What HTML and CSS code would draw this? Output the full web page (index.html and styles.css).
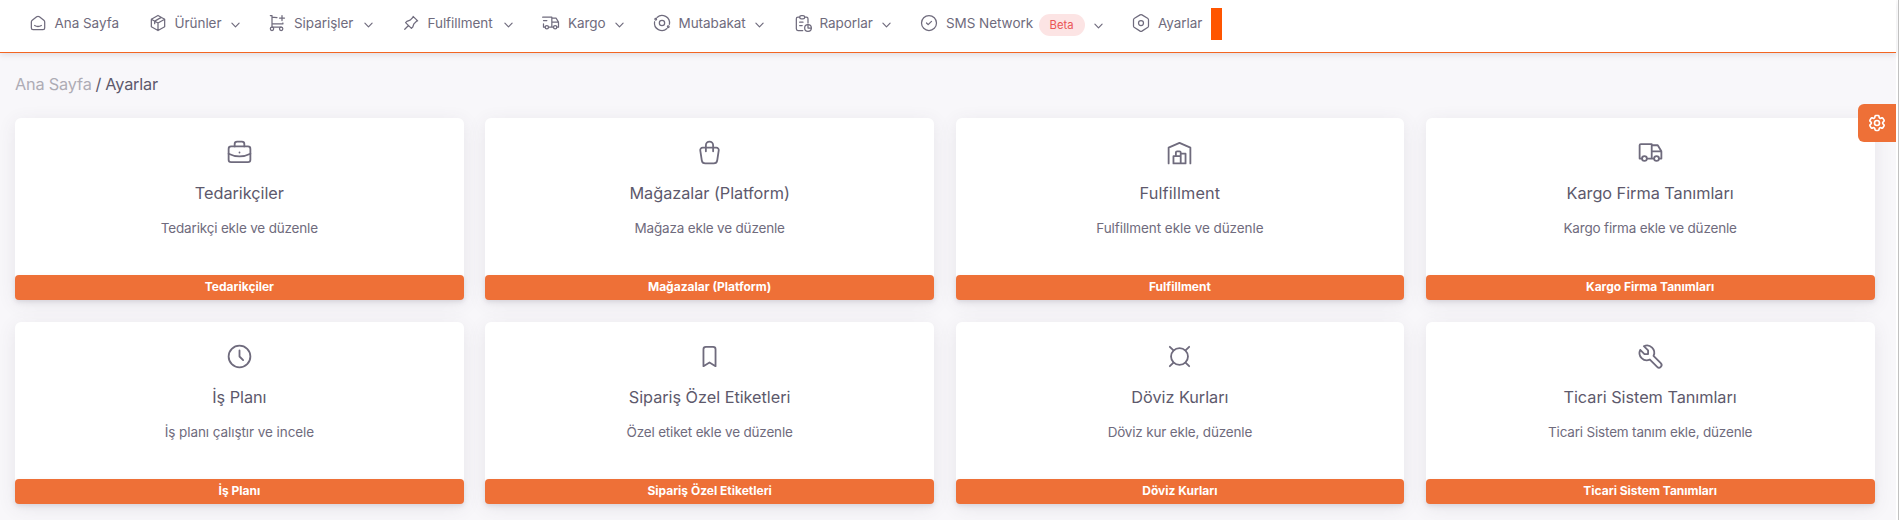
FILE: index.html
```html
<!DOCTYPE html>
<html lang="tr">
<head>
<meta charset="utf-8">
<title>Ayarlar</title>
<link rel="stylesheet" href="styles.css">
</head>
<body>
<svg class="sprite" aria-hidden="true">
  <symbol id="chevron" viewBox="0 0 10 6"><path d="M1 1l4 4l4-4"/></symbol>
</svg>
<div class="page">
  <nav class="navbar">
    <a class="nav-item"><svg class="icon" viewBox="0 0 24 24"><path d="M19 8.71l-5.333-4.148a2.666 2.666 0 0 0-3.274 0L5.059 8.71A2.665 2.665 0 0 0 4.03 10.815v7.2a2 2 0 0 0 2 2h12a2 2 0 0 0 2-2v-7.2c0-.823-.38-1.6-1.03-2.105M16 15c-2.21 1.333-5.792 1.333-8 0"/></svg><span>Ana Sayfa</span></a>
    <a class="nav-item"><svg class="icon" viewBox="0 0 24 24"><path d="M12 3l8 4.5v9L12 21l-8-4.500v-9zM12 12l8-4.500M12 12v9M12 12L4 7.500M16 5.250l-8 4.500M8 9.750v3"/></svg><span>Ürünler</span><svg class="chevron"><use href="#chevron"/></svg></a>
    <a class="nav-item"><svg class="icon" viewBox="0 0 24 24"><circle cx="6" cy="19" r="2"/><circle cx="17" cy="19" r="2"/><path d="M17 17H6V3H4M6 5l6 .429M19.143 12L19 13H6M15 6h6M18 3v6"/></svg><span>Siparişler</span><svg class="chevron"><use href="#chevron"/></svg></a>
    <a class="nav-item"><svg class="icon" viewBox="0 0 24 24"><path d="M15 4.500l-4 4L7 10l-1.500 1.500l7 7L14 17l1.500-4l4-4M9 15l-4.500 4.500M14.500 4L20 9.500"/></svg><span>Fulfillment</span><svg class="chevron"><use href="#chevron"/></svg></a>
    <a class="nav-item"><svg class="icon" viewBox="0 0 24 24"><circle cx="7" cy="17" r="2"/><circle cx="17" cy="17" r="2"/><path d="M5 17H3v-4M2 5h11v12m-4 0h6m4 0h2v-6h-8m0-5h5l3 5M3 9h4"/></svg><span>Kargo</span><svg class="chevron"><use href="#chevron"/></svg></a>
    <a class="nav-item"><svg class="icon" viewBox="0 0 24 24"><circle cx="12" cy="12" r="3.200"/><circle cx="19.500" cy="16.500" r="1"/><circle cx="4.500" cy="7.500" r="1"/><path d="M6 5.300A9 9 0 0 1 20.900 13.500M3.100 10.500A9 9 0 0 0 18 18.700"/></svg><span>Mutabakat</span><svg class="chevron"><use href="#chevron"/></svg></a>
    <a class="nav-item"><svg class="icon" viewBox="0 0 24 24"><path d="M8 5H6a2 2 0 0 0-2 2v12a2 2 0 0 0 2 2h5.700M18 12V7a2 2 0 0 0-2-2h-2M18 14v4h4M8 11h4M8 15h3"/><rect x="8" y="3" width="6" height="4" rx="2"/><circle cx="18" cy="18" r="4"/></svg><span>Raporlar</span><svg class="chevron"><use href="#chevron"/></svg></a>
    <a class="nav-item"><svg class="icon" viewBox="0 0 24 24"><circle cx="12" cy="12" r="9"/><path d="M9 12l2 2l4-4"/></svg><span>SMS Network</span><span class="badge">Beta</span><svg class="chevron"><use href="#chevron"/></svg></a>
    <a class="nav-item"><svg class="icon" viewBox="0 0 24 24"><path d="M19.875 6.270A2.225 2.225 0 0 1 21 8.218v7.284c0 .809-.443 1.555-1.158 1.948l-6.750 4.270a2.269 2.269 0 0 1-2.184 0l-6.750-4.270A2.225 2.225 0 0 1 3 15.502V8.217c0-.809.443-1.554 1.158-1.947l6.750-3.980a2.330 2.330 0 0 1 2.250 0z"/><circle cx="12" cy="12" r="3"/></svg><span>Ayarlar</span><i class="marker"></i></a>
  </nav>
  <main class="content">
    <h4 class="breadcrumb"><span class="muted">Ana Sayfa</span><span class="slash">/</span><span>Ayarlar</span></h4>
    <div class="cards">
      <section class="card"><svg class="icon" viewBox="0 0 24 24"><rect x="3" y="7" width="18" height="13" rx="2"/><path d="M8 7V5a2 2 0 0 1 2-2h4a2 2 0 0 1 2 2v2M12 12v.01M3 13a20 20 0 0 0 18 0"/></svg><h5>Tedarikçiler</h5><p>Tedarikçi ekle ve düzenle</p><a class="btn">Tedarikçiler</a></section>
      <section class="card"><svg class="icon" viewBox="0 0 24 24"><path d="M6.331 8h11.339a2 2 0 0 1 1.977 2.304l-1.255 8.152A3 3 0 0 1 15.426 21H8.574a3 3 0 0 1-2.965-2.544l-1.255-8.152A2 2 0 0 1 6.331 8zM9 11V6a3 3 0 0 1 6 0v5"/></svg><h5>Mağazalar (Platform)</h5><p>Mağaza ekle ve düzenle</p><a class="btn">Mağazalar (Platform)</a></section>
      <section class="card"><svg class="icon" viewBox="0 0 24 24"><path d="M3 21V8l9-4l9 4v13M13 13h4v8H7v-6h6M13 21v-9a1 1 0 0 0-1-1h-2a1 1 0 0 0-1 1v3"/></svg><h5 class="wide">Fulfillment</h5><p class="wide">Fulfillment ekle ve düzenle</p><a class="btn">Fulfillment</a></section>
      <section class="card"><svg class="icon" viewBox="0 0 24 24"><circle cx="7" cy="17" r="2"/><circle cx="17" cy="17" r="2"/><path d="M5 17H3V6a1 1 0 0 1 1-1h9v12m-4 0h6m4 0h2v-6h-8m0-5h5l3 5"/></svg><h5>Kargo Firma Tanımları</h5><p>Kargo firma ekle ve düzenle</p><a class="btn">Kargo Firma Tanımları</a></section>
      <section class="card"><svg class="icon" viewBox="0 0 24 24"><circle cx="12" cy="12" r="9"/><path d="M12 7v5l3 3"/></svg><h5>İş Planı</h5><p class="wide">İş planı çalıştır ve incele</p><a class="btn">İş Planı</a></section>
      <section class="card"><svg class="icon" viewBox="0 0 24 24"><path d="M9 4h6a2 2 0 0 1 2 2v14l-5-3l-5 3V6a2 2 0 0 1 2-2"/></svg><h5>Sipariş Özel Etiketleri</h5><p>Özel etiket ekle ve düzenle</p><a class="btn">Sipariş Özel Etiketleri</a></section>
      <section class="card"><svg class="icon" viewBox="0 0 24 24"><circle cx="12" cy="12" r="7"/><path d="M4 4l3 3M20 4l-3 3M4 20l3-3M20 20l-3-3"/></svg><h5>Döviz Kurları</h5><p>Döviz kur ekle, düzenle</p><a class="btn">Döviz Kurları</a></section>
      <section class="card"><svg class="icon" viewBox="0 0 24 24"><path d="M7 10h3V7L6.500 3.500a6 6 0 0 1 8 8l6 6a2 2 0 0 1-3 3l-6-6a6 6 0 0 1-8-8L7 10"/></svg><h5>Ticari Sistem Tanımları</h5><p>Ticari Sistem tanım ekle, düzenle</p><a class="btn">Ticari Sistem Tanımları</a></section>
    </div>
  </main>
  <button class="customizer" aria-label="Ayarlar"><svg class="icon" viewBox="0 0 24 24"><path d="M9.594 3.94c.09-.542.56-.94 1.11-.94h2.593c.55 0 1.02.398 1.11.94l.213 1.281c.063.374.313.686.645.87.074.04.147.083.22.127.325.196.72.257 1.075.124l1.217-.456a1.125 1.125 0 0 1 1.37.49l1.296 2.247a1.125 1.125 0 0 1-.26 1.431l-1.003.827c-.293.241-.438.613-.43.992a7.723 7.723 0 0 1 0 .255c-.008.378.137.75.43.991l1.004.827c.424.35.534.955.26 1.43l-1.298 2.247a1.125 1.125 0 0 1-1.369.491l-1.217-.456c-.355-.133-.75-.072-1.076.124a6.47 6.47 0 0 1-.22.128c-.331.183-.581.495-.644.869l-.213 1.281c-.09.543-.56.94-1.11.94h-2.594c-.55 0-1.019-.398-1.11-.94l-.213-1.281c-.062-.374-.312-.686-.644-.87a6.52 6.52 0 0 1-.22-.127c-.325-.196-.72-.257-1.076-.124l-1.217.456a1.125 1.125 0 0 1-1.369-.49l-1.297-2.247a1.125 1.125 0 0 1 .26-1.431l1.004-.827c.292-.24.437-.613.43-.991a6.932 6.932 0 0 1 0-.255c.007-.38-.138-.751-.43-.992l-1.004-.827a1.125 1.125 0 0 1-.26-1.43l1.297-2.247a1.125 1.125 0 0 1 1.37-.491l1.216.456c.356.133.751.072 1.076-.124.072-.044.146-.086.22-.128.332-.183.582-.495.644-.869l.214-1.28z"/><circle cx="12" cy="12" r="3"/></svg></button>
</div>
</body>
</html>
```
FILE: styles.css
```css
* { box-sizing: border-box; }
body {
  margin: 0;
  height: 520px;
  overflow: hidden;
  background: #fff;
  color: #6f6b7d;
  font-family: Inter, "Liberation Sans", sans-serif;
  font-size: 13.5px;
  border-right: 1px solid #c1c1c1;
}
.sprite { position: absolute; width: 0; height: 0; }
.page { position: relative; width: 1896px; height: 520px; background: #f8f7fa; }
.icon, .chevron, .sprite {
  fill: none;
  stroke: currentColor;
  stroke-width: 1.5;
  stroke-linecap: round;
  stroke-linejoin: round;
  flex: none;
}
.navbar {
  height: 53px;
  padding: 0 0 6px 27.500px;
  display: grid;
  grid-template-columns: 120px 119.500px 133.500px 140.500px 110.500px 141px 126.500px 212px 100px;
  background: #fff;
  border-bottom: 1px solid #f26522;
  box-shadow: 0 2px 6px rgba(75, 70, 92, .14);
}
.nav-item { display: flex; align-items: center; white-space: nowrap; letter-spacing: -.05px; }
.nav-item .icon { width: 20px; height: 20px; margin-right: 7px; }
.chevron { width: 9px; height: 6px; margin: 3px 0 0 9.500px; }
.nav-item .chevron { stroke-width: 1.300; }
.nav-item:nth-child(3) .chevron,
.nav-item:nth-child(4) .chevron { margin-left: 11px; }
.badge {
  width: 46px;
  height: 22px;
  margin: 3px 0 0 5.500px;
  display: grid;
  place-items: center;
  border-radius: 11px;
  background: #fce4e4;
  color: #ea5455;
  font-size: 11.300px;
}
.nav-item .badge + .chevron { margin-top: 5px; margin-left: 9px; }
.marker { width: 10.700px; height: 32px; margin: 2px 0 0 8.500px; background: #f50; }
.content { padding: 20px 21.500px 0 15px; }
.breadcrumb {
  display: flex;
  gap: 4px;
  margin: 0;
  height: 45px;
  color: #5d596c;
  font-size: 16.300px;
  font-weight: 400;
  letter-spacing: -.18px;
  line-height: 23px;
}
.muted { color: #aeacb5; }
.cards { display: grid; grid-template-columns: repeat(4, 1fr); gap: 22px 21.500px; }
.card {
  height: 182px;
  padding-top: 20px;
  display: flex;
  flex-direction: column;
  align-items: center;
  background: #fff;
  border-radius: 6px;
  box-shadow: 0 4px 18px rgba(75, 70, 92, .1);
}
.card .icon { width: 29px; height: 29px; }
.card h5 { margin: 14px 0 0; color: #5d596c; font-size: 16.300px; font-weight: 400; letter-spacing: -.04px; line-height: 24px; }
.card h5.wide { letter-spacing: .15px; }
.card p { margin: 13px 0 0; letter-spacing: -.18px; line-height: 20px; }
.card p.wide { letter-spacing: -.07px; }
.btn {
  width: 100%;
  height: 25px;
  margin-top: auto;
  border-radius: 4px;
  background: #ee7037;
  box-shadow: 0 2px 4px rgba(165, 163, 174, .3);
  color: #fff;
  font-size: 12px;
  font-weight: 700;
  line-height: 24px;
  text-align: center;
}
.customizer {
  position: absolute;
  top: 104px;
  right: 0;
  width: 38px;
  height: 38px;
  padding: 0;
  display: grid;
  place-items: center;
  border: 0;
  border-radius: 6px 0 0 6px;
  background: #ee7037;
  color: #fff;
}
.customizer .icon { width: 20px; height: 20px; stroke-width: 2; }
```
